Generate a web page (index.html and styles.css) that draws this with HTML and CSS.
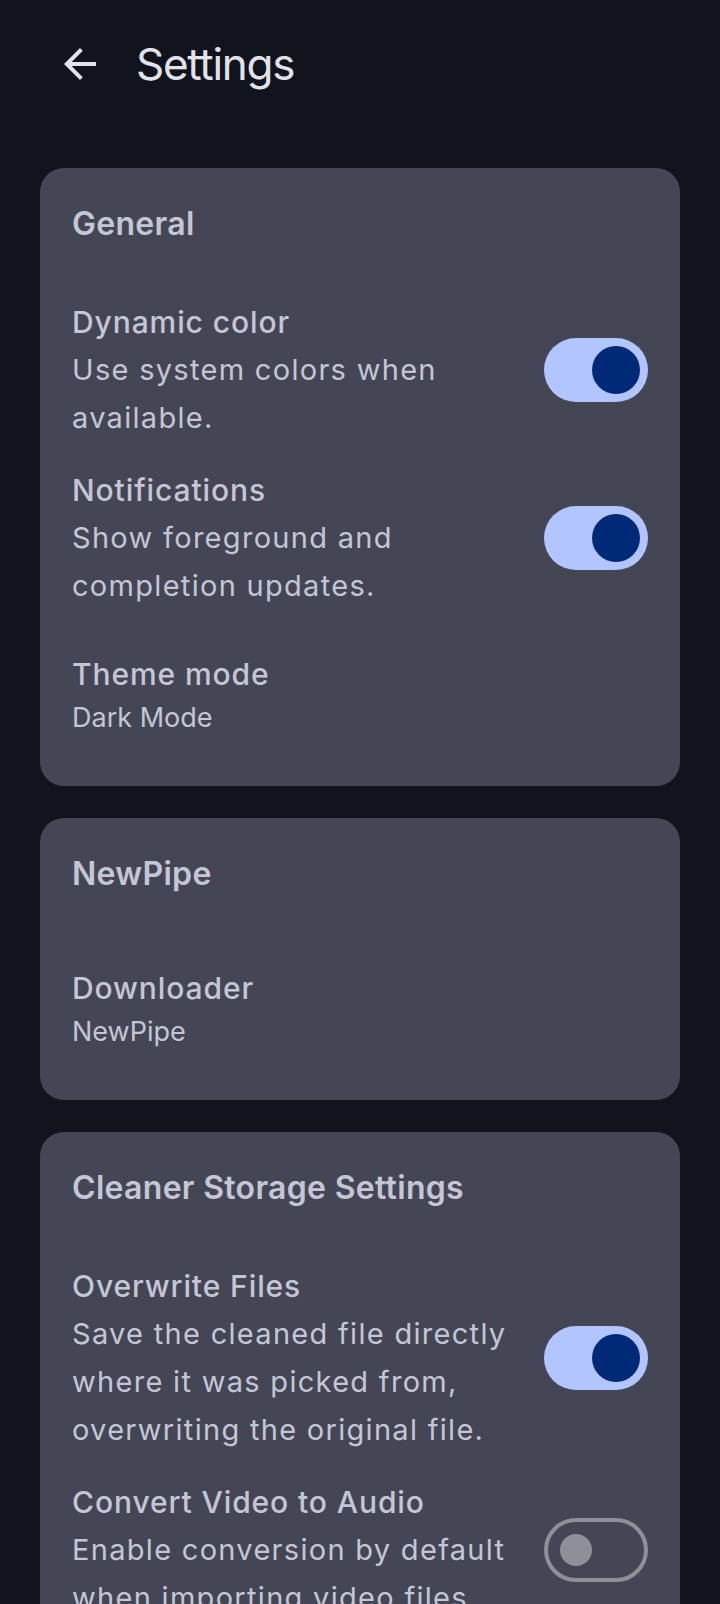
FILE: index.html
```html
<!DOCTYPE html>
<html lang="en">
<head>
<meta charset="utf-8">
<title>Settings</title>
<link rel="stylesheet" href="styles.css">
</head>
<body>
<header class="topbar">
  <button class="back" aria-label="Back">
    <svg viewBox="0 0 24 24" width="48" height="48"><path d="M20 11H7.83l5.59-5.59L12 4l-8 8 8 8 1.41-1.41L7.83 13H20v-2z" fill="currentColor"/></svg>
  </button>
  <h1 class="title">Settings</h1>
</header>
<main class="content">
  <section class="card">
    <h2 class="card-title">General</h2>
    <div class="item switch-item">
      <div class="text">
        <div class="item-title">Dynamic color</div>
        <div class="item-desc">Use system colors when available.</div>
      </div>
      <div class="switch on"><span class="thumb"></span></div>
    </div>
    <div class="item switch-item">
      <div class="text">
        <div class="item-title">Notifications</div>
        <div class="item-desc">Show foreground and completion updates.</div>
      </div>
      <div class="switch on"><span class="thumb"></span></div>
    </div>
    <div class="item plain-item">
      <div class="text">
        <div class="item-title">Theme mode</div>
        <div class="item-sub">Dark Mode</div>
      </div>
    </div>
  </section>
  <section class="card">
    <h2 class="card-title">NewPipe</h2>
    <div class="item plain-item">
      <div class="text">
        <div class="item-title">Downloader</div>
        <div class="item-sub">NewPipe</div>
      </div>
    </div>
  </section>
  <section class="card">
    <h2 class="card-title">Cleaner Storage Settings</h2>
    <div class="item switch-item">
      <div class="text">
        <div class="item-title">Overwrite Files</div>
        <div class="item-desc">Save the cleaned file directly where it was picked from, overwriting the original file.</div>
      </div>
      <div class="switch on"><span class="thumb"></span></div>
    </div>
    <div class="item switch-item">
      <div class="text">
        <div class="item-title">Convert Video to Audio</div>
        <div class="item-desc">Enable conversion by default when importing video files.</div>
      </div>
      <div class="switch off"><span class="thumb"></span></div>
    </div>
  </section>
</main>
</body>
</html>
```
FILE: styles.css
```css
html, body {
  margin: 0;
  padding: 0;
  background: #11141c;
}
body {
  font-family: Inter, "Noto Sans", sans-serif;
  color: #c4c6d6;
  width: 720px;
  min-height: 1604px;
}
.topbar {
  height: 128px;
  display: flex;
  align-items: center;
  padding-left: 56px;
  gap: 32px;
  box-sizing: border-box;
}
.back {
  width: 48px;
  height: 48px;
  padding: 0;
  border: 0;
  background: none;
  color: #e2e2ea;
  display: flex;
}
.title {
  margin: 0;
  font-size: 44px;
  font-weight: 400;
  letter-spacing: -1.3px;
  color: #e2e2ea;
  line-height: 56px;
}
.content {
  padding: 40px 40px 0;
  display: flex;
  flex-direction: column;
  gap: 32px;
}
.card {
  background: #444655;
  border-radius: 24px;
  padding: 32px 32px 20px;
}
.card-title {
  margin: 0 0 38px;
  font-size: 32px;
  font-weight: 600;
  letter-spacing: 0.3px;
  line-height: 48px;
}
.item {
  display: flex;
  align-items: center;
}
.switch-item {
  padding: 12px 0;
}
.plain-item {
  padding: 28px 0;
}
.text {
  flex: 1;
  padding-right: 28px;
}
.item-title {
  font-size: 30px;
  font-weight: 500;
  letter-spacing: 0.9px;
  line-height: 48px;
}
.item-desc {
  font-size: 29px;
  font-weight: 400;
  letter-spacing: 1.3px;
  line-height: 48px;
}
.item-sub {
  font-size: 27px;
  line-height: 40px;
}
.switch {
  width: 104px;
  height: 64px;
  border-radius: 32px;
  box-sizing: border-box;
  display: flex;
  align-items: center;
  flex-shrink: 0;
}
.switch.on {
  background: #b3c5ff;
  padding: 8px;
  justify-content: flex-end;
}
.switch.on .thumb {
  width: 48px;
  height: 48px;
  border-radius: 50%;
  background: #002a78;
}
.switch.off {
  border: 4px solid #8e9099;
  padding: 12px;
  justify-content: flex-start;
}
.switch.off .thumb {
  width: 32px;
  height: 32px;
  border-radius: 50%;
  background: #8e9099;
}
```
